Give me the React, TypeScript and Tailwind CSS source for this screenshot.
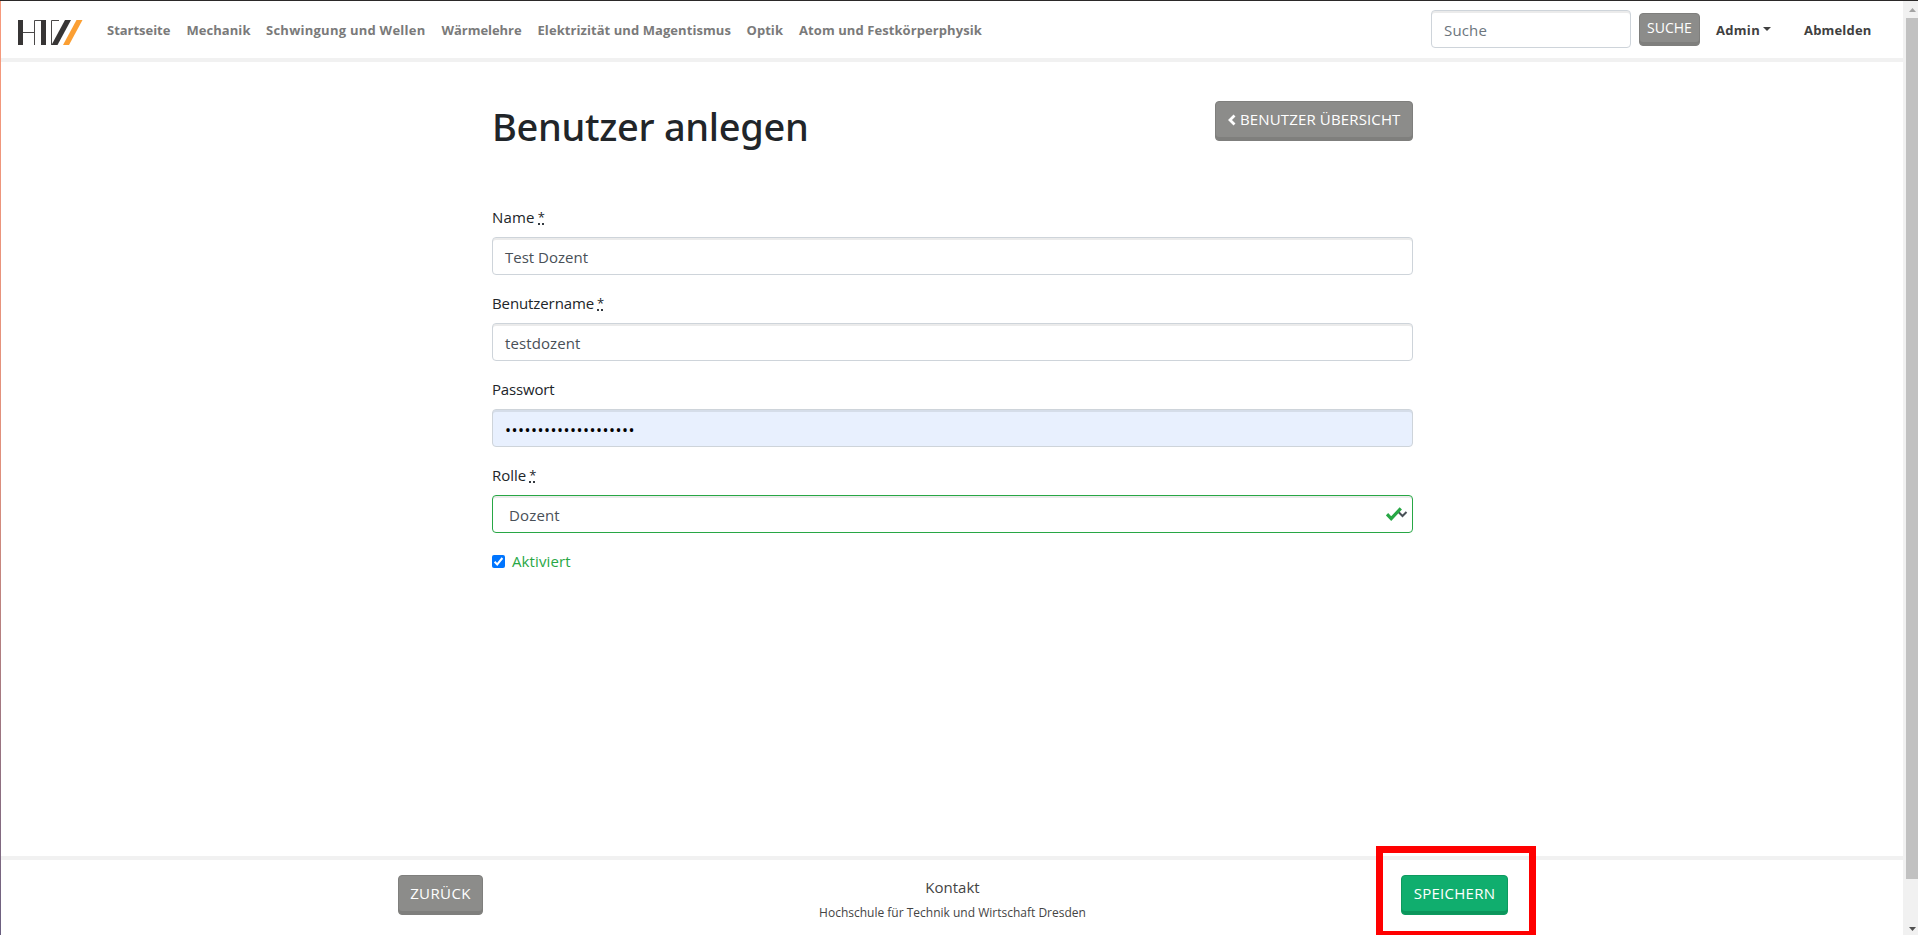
import type { ReactNode } from 'react';

const navItems = [
  { label: 'Startseite', cls: 'w-[79.5px] tracking-[-0.03px]' },
  { label: 'Mechanik', cls: 'w-[79.5px] tracking-[0.05px]' },
  { label: 'Schwingung und Wellen', cls: 'w-[175.5px] tracking-[0.25px]' },
  { label: 'Wärmelehre', cls: 'w-24 tracking-[-0.05px]' },
  { label: 'Elektrizität und Magentismus', cls: 'w-[209px] tracking-[0.07px]' },
  { label: 'Optik', cls: 'w-[52.5px] tracking-[0.05px]' },
  { label: 'Atom und Festkörperphysik', cls: 'w-[200px] tracking-[0.08px]' },
];

const greyButton =
  'bg-[#8c8c8a] text-white rounded-[4px] border border-[#7f7f7d] shadow-[inset_0_-3px_0_#7f7f7d] whitespace-nowrap';
const fieldBox = 'h-[38px] w-full rounded-[4px] border flex items-center pt-[2px] text-[15px] leading-6';

function Logo() {
  return (
    <svg width="65" height="25" viewBox="0 0 65 25" className="block">
      <g fill="#373535">
        <rect x="0" y="0" width="5" height="25" />
        <rect x="23" y="0" width="5" height="25" />
        <polygon points="47,0 53,0 39.5,25 33.5,25" />
      </g>
      <g fill="none" stroke="#4a4848" strokeWidth="1">
        <path d="M5 12.5H16.5" />
        <path d="M16.5 25V0.5H23" />
        <path d="M33.5 25V0.5H41" />
      </g>
      <polygon points="58.5,0 64.5,0 51,25 45,25" fill="#fb9f33" />
    </svg>
  );
}

function Label({ children, required }: { children: ReactNode; required?: boolean }) {
  return (
    <div className="mb-2 flex h-6 items-center text-[15px] leading-6 text-[#212529]">
      {children}
      {required && (
        <span className="relative ml-[3px] block h-6 w-[7px] text-[13px] leading-6">
          *
          <span className="absolute bottom-[4px] left-0 flex gap-[2px]">
            <i className="size-[2px] bg-[#343a40]" />
            <i className="size-[2px] bg-[#343a40]" />
          </span>
        </span>
      )}
    </div>
  );
}

function Header() {
  return (
    <header className="flex h-[61px] w-[1902px] items-center border-b-4 border-[#f1f1f1] pb-[1px] pl-[17px] text-[13px] font-bold">
      <div className="w-[89px] pt-[7px]">
        <Logo />
      </div>
      <nav className="flex pt-[3px] text-[#7a7a7a]">
        {navItems.map((n) => (
          <a key={n.label} className={`block whitespace-nowrap ${n.cls}`}>
            {n.label}
          </a>
        ))}
      </nav>
      <div className="ml-auto flex items-center text-[#404040]">
        <div className="flex h-[38px] w-[200px] items-center rounded-[4px] border border-[#ced4da] pt-[3px] pl-3 text-[15px] font-normal tracking-[0.15px] text-[#6c757d] shadow-[inset_0_2px_0_#ebebeb]">
          Suche
        </div>
        <button className={`mt-px ml-2 h-[33px] w-[61px] pb-1 text-[14px] font-normal ${greyButton}`}>SUCHE</button>
        <a className="ml-4 flex w-[88px] items-center pt-[3px] tracking-[0.3px]">
          Admin
          <span className="mb-[3px] ml-[3px] border-x-4 border-t-4 border-x-transparent border-t-[#404040]" />
        </a>
        <a className="w-[99px] pt-[3px] tracking-[0.18px]">Abmelden</a>
      </div>
    </header>
  );
}

function Form() {
  return (
    <main className="ml-[491px] h-[794px] w-[921px] pt-[39px]">
      <div className="flex h-[104px] items-start justify-between">
        <h1 className="font-['Noto_Sans'] text-[38px] leading-[50px] font-medium tracking-[-0.32px] text-[#212529]">
          Benutzer anlegen
        </h1>
        <button
          className={`flex h-10 w-[198px] items-center pb-[3px] pl-3 text-[15px] tracking-[0.14px] ${greyButton}`}
        >
          <svg width="8" height="12" viewBox="0 0 8 12" className="mr-1">
            <path d="M6.5 1.5L2 6L6.5 10.5" fill="none" stroke="#fff" strokeWidth="2.8" />
          </svg>
          BENUTZER ÜBERSICHT
        </button>
      </div>
      <div className="flex flex-col gap-4">
        <div>
          <Label required>
            <span className="tracking-[0.2px]">Name</span>
          </Label>
          <div className={`${fieldBox} border-[#ced4da] pl-3 text-[#495057] shadow-[inset_0_2px_0_#ebebeb]`}>
            Test Dozent
          </div>
        </div>
        <div>
          <Label required>
            <span className="tracking-[-0.1px]">Benutzername</span>
          </Label>
          <div
            className={`${fieldBox} border-[#ced4da] pl-3 tracking-[0.1px] text-[#495057] shadow-[inset_0_2px_0_#ebebeb]`}
          >
            testdozent
          </div>
        </div>
        <div>
          <Label>
            <span className="tracking-[-0.18px]">Passwort</span>
          </Label>
          <div className={`${fieldBox} border-[#ced4da] bg-[#e8f0fe] pl-3 shadow-[inset_0_2px_0_#d5dde9]`}>
            <span className="pt-px text-[16px] tracking-[0.48px] text-black">••••••••••••••••••••</span>
          </div>
        </div>
        <div>
          <Label required>
            <span>Rolle</span>
          </Label>
          <div
            className={`${fieldBox} justify-between border-[#28a745] pr-1 pl-4 tracking-[0.15px] text-[#495057] shadow-[inset_0_2px_0_#ebebeb]`}
          >
            Dozent
            <svg width="22" height="14" viewBox="0 0 22 14" className="mb-[2px]">
              <path d="M12.5 5L16.5 9L20.5 5" fill="none" stroke="#495057" strokeWidth="2" />
              <path d="M1 7.2L5.2 11.6L14.8 1.4" fill="none" stroke="#28a745" strokeWidth="3.2" />
            </svg>
          </div>
        </div>
      </div>
      <div className="mt-4 flex h-6 items-center">
        <span className="flex size-[13px] items-center justify-center rounded-[2px] bg-[#0075ff]">
          <svg width="13" height="13" viewBox="0 0 13 13">
            <path d="M2.6 6.8L5.2 9.4L10.4 3" fill="none" stroke="#fff" strokeWidth="2" />
          </svg>
        </span>
        <span className="ml-[7px] text-[15px] leading-6 tracking-[0.1px] text-[#28a745]">Aktiviert</span>
      </div>
    </main>
  );
}

function Footer() {
  return (
    <footer className="flex h-[79px] w-[1902px] items-start border-t-4 border-[#f1f1f1] pt-[15px]">
      <button className={`ml-[397px] h-10 w-[85px] pb-[3px] text-[15px] tracking-[0.4px] ${greyButton}`}>
        ZURÜCK
      </button>
      <div className="ml-[327px] w-[285px] text-center text-[#444]">
        <div className="text-[15px] leading-6">Kontakt</div>
        <div className="pt-[4px] text-[12px] leading-5 whitespace-nowrap">
          Hochschule für Technik und Wirtschaft Dresden
        </div>
      </div>
      <div className="relative ml-[306px] h-10 w-[107px]">
        <button className="h-10 w-[107px] rounded-[4px] border border-[#0e9a5f] bg-[#10ae6e] pb-[3px] text-[15px] tracking-[0.25px] text-white shadow-[inset_0_-3px_0_#0c965c]">
          SPEICHERN
        </button>
        <div className="absolute -top-[29px] -left-[25px] h-[89px] w-[160px] border-x-[7px] border-t-[7px] border-b-4 border-[#f00]" />
      </div>
    </footer>
  );
}

function Scrollbar() {
  return (
    <div className="flex h-[934px] w-[15px] shrink-0 flex-col items-end bg-[#f1f1f1]">
      <svg width="12" height="17" viewBox="0 0 12 17">
        <polygon points="3,11 10,11 6.5,7" fill="#a3a3a3" />
      </svg>
      <div className="h-[861px] w-3 bg-[#c1c1c1]" />
      <svg width="12" height="17" viewBox="0 0 12 17" className="mt-auto">
        <polygon points="3,9 10,9 6.5,13" fill="#505050" />
      </svg>
    </div>
  );
}

export default function App() {
  return (
    <div className="h-[935px] w-[1918px] overflow-hidden border-t border-[#2b2929] bg-white font-['Open_Sans',sans-serif]">
      <div className="flex h-[934px]">
        <div className="w-px shrink-0 bg-linear-to-b from-[#f79a7c] via-[#e0907c] to-[#6a5f80]" />
        <div className="w-[1902px] shrink-0 overflow-hidden">
          <Header />
          <Form />
          <Footer />
        </div>
        <Scrollbar />
      </div>
    </div>
  );
}
